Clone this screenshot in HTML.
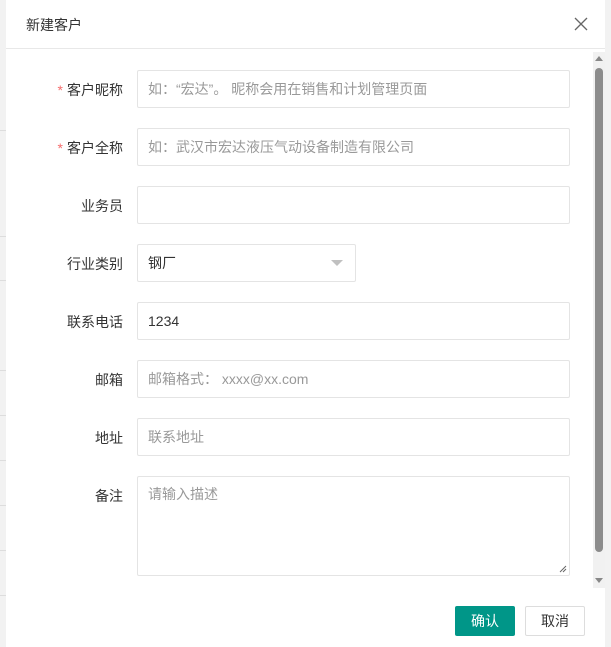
<!DOCTYPE html>
<html><head><meta charset="utf-8"><style>
*{box-sizing:border-box;margin:0;padding:0}
body{width:611px;height:647px;overflow:hidden;background:#f2f2f2;font-family:"Liberation Sans","Noto Sans CJK SC",sans-serif;font-size:14px;color:#333;position:relative}
.bgl{position:absolute;left:0;width:6px;height:1px;background:#ddd}
.dlg{position:absolute;left:6px;top:0;width:599px;height:647px;background:#fff}
.hd{height:49px;border-bottom:1px solid #e8e8e8;position:relative}
.hd .t{position:absolute;left:20px;top:15px;font-size:14px;color:#333}
.hd .x{position:absolute;left:568px;top:17px}
.row{position:absolute;left:0;width:580px}
.lab{position:absolute;right:463px;top:10px;font-size:14px;color:#333;white-space:nowrap}
.lab .s{color:#f56c6c;margin-right:4px}
.in{position:absolute;left:131px;width:433px;height:38px;border:1px solid #e4e4e4;border-radius:2px;padding:0 10px;line-height:36px;font-size:14px;color:#333}
.ph{color:#999}
.sb{position:absolute;left:587px;top:52px;width:12px;height:536px;background:#f1f1f1}
.th{position:absolute;left:2px;top:16px;width:8px;height:484px;background:#8c8c8c;border-radius:4px}
.btn{position:absolute;top:606px;width:60px;height:30px;border-radius:2px;font-size:14px;text-align:center;line-height:28px}
</style></head><body>
<div class="bgl" style="top:130px"></div><div class="bgl" style="top:236px"></div><div class="bgl" style="top:280px"></div><div class="bgl" style="top:370px"></div><div class="bgl" style="top:415px"></div><div class="bgl" style="top:460px"></div><div class="bgl" style="top:505px"></div><div class="bgl" style="top:550px"></div><div class="bgl" style="top:595px"></div>
<div class="dlg">
<div class="hd"><span class="t">新建客户</span>
<svg class="x" width="14" height="14" viewBox="0 0 14 14"><path d="M1 1L13 13M13 1L1 13" stroke="#666" stroke-width="1.3"/></svg></div>
<div class="row" style="top:70px"><span class="lab"><span class="s">*</span>客户昵称</span></div>
<div class="in ph" style="top:70px">如：“宏达”。 昵称会用在销售和计划管理页面</div>
<div class="row" style="top:128px"><span class="lab"><span class="s">*</span>客户全称</span></div>
<div class="in ph" style="top:128px">如：武汉市宏达液压气动设备制造有限公司</div>
<div class="row" style="top:186px"><span class="lab">业务员</span></div>
<div class="in" style="top:186px"></div>
<div class="row" style="top:244px"><span class="lab">行业类别</span></div>
<div class="in" style="top:244px;width:219px">钢厂<svg style="position:absolute;left:193px;top:15px" width="12" height="7"><path d="M0 0L12 0L6 6Z" fill="#c0c0c0"/></svg></div>
<div class="row" style="top:302px"><span class="lab">联系电话</span></div>
<div class="in" style="top:302px">1234</div>
<div class="row" style="top:360px"><span class="lab">邮箱</span></div>
<div class="in ph" style="top:360px">邮箱格式： xxxx@xx.com</div>
<div class="row" style="top:418px"><span class="lab">地址</span></div>
<div class="in ph" style="top:418px">联系地址</div>
<div class="row" style="top:476px"><span class="lab">备注</span></div>
<div class="in ph" style="top:476px;height:100px;line-height:20px;padding-top:7px">请输入描述
<svg style="position:absolute;right:2px;bottom:2px" width="8" height="8"><path d="M7 1L1 7M7 4L4 7" stroke="#666" stroke-width="1"/></svg></div>
<div class="sb"><svg style="position:absolute;left:2px;top:4px" width="8" height="6"><path d="M0 5L4 0L8 5Z" fill="#888"/></svg><div class="th"></div><svg style="position:absolute;left:2px;top:526px" width="8" height="6"><path d="M0 0L8 0L4 5Z" fill="#888"/></svg></div>
<div class="btn" style="left:449px;background:#009688;color:#fff;border:1px solid #009688">确认</div>
<div class="btn" style="left:519px;background:#fff;color:#333;border:1px solid #ddd">取消</div>
</div>
</body></html>
